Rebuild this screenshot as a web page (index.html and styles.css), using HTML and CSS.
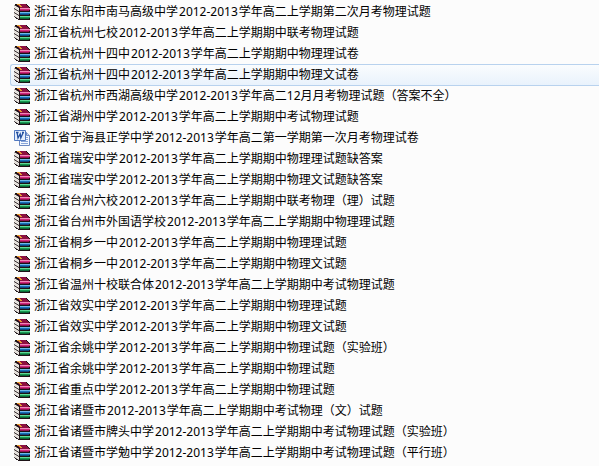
FILE: index.html
```html
<!DOCTYPE html>
<html lang="zh-CN">
<head>
<meta charset="UTF-8">
<meta name="viewport" content="width=device-width, initial-scale=1.0">
<title>物理试题</title>
<link rel="stylesheet" href="styles.css">
</head>
<body>

<svg class="sprite" aria-hidden="true">
  <!-- stack of three books -->
  <symbol id="rar" viewBox="0 0 16 16">
    <g shape-rendering="crispEdges">
      <path d="M1 0H12L16 4V6L15 7L16 8V10L15 11L16 12V15L15 16H5L0 13V1Z" fill="#1c1216"/>
      <path d="M2 0H11L15 4H6Z" fill="#8c1040"/>
      <path d="M3 0H6V1H7V2H8V3H6V2H5V1H3Z" fill="#e8a030"/>
      <path d="M6 4H16V5H6Z" fill="#f088b8"/>
      <path d="M6 5H16V6H6Z" fill="#d02878"/>
      <path d="M6 6H15V7H6Z" fill="#901050"/>
      <path d="M6 8H16V9H6Z" fill="#70b8e8"/>
      <path d="M6 9H16V10H6Z" fill="#1870b8"/>
      <path d="M6 10H15V11H6Z" fill="#104880"/>
      <path d="M6 12H16V13H6Z" fill="#60d898"/>
      <path d="M6 13H16V14H6Z" fill="#189850"/>
      <path d="M6 14H15V15H6Z" fill="#0c6838"/>
    </g>
    <path d="M0 1L5 4V7L0 4ZM0 5L5 8V11L0 8ZM0 9L5 12V15L0 12Z" fill="#fbf8f4"/>
    <path d="M0 2.500L5 5.500M0 6.500L5 9.500M0 10.500L5 13.500" stroke="#b8b0a8" stroke-width=".5"/>
  </symbol>
  <!-- Word document -->
  <symbol id="doc" viewBox="0 0 16 16">
    <path d="M5.500 2.500H12.500L15.500 5.500V15.500H5.500Z" fill="#f4f8fe" stroke="#6c88c0"/>
    <path d="M12.500 2.500V5.500H15.500" fill="#c4d4f0" stroke="#6c88c0"/>
    <path d="M12 7.500H14M12 9.500H14M7 11.500H14M7 13.500H14" stroke="#88a4d8"/>
    <path d="M.5.5H11.500V10.500H.5Z" fill="#e4eefc" stroke="#5078c0"/>
    <path d="M2 2.500H4.500M3.200 3L4 8L6.200 4L6.800 8L9 3M8 2.500H10" fill="none" stroke="#2450a0" stroke-width="1.300"/>
  </symbol>
</svg>

<ul class="file-list">
  <li><a class="file" href="#"><svg class="icon"><use href="#rar"/></svg><span>浙江省东阳市南马高级中学<span class="year">2012-2013</span>学年高二上学期第二次月考物理试题</span></a></li>
  <li><a class="file" href="#"><svg class="icon"><use href="#rar"/></svg><span>浙江省杭州七校<span class="year">2012-2013</span>学年高二上学期期中联考物理试题</span></a></li>
  <li><a class="file" href="#"><svg class="icon"><use href="#rar"/></svg><span>浙江省杭州十四中<span class="year">2012-2013</span>学年高二上学期期中物理理试卷</span></a></li>
  <li><a class="file active" href="#"><svg class="icon"><use href="#rar"/></svg><span>浙江省杭州十四中<span class="year">2012-2013</span>学年高二上学期期中物理文试卷</span></a></li>
  <li><a class="file" href="#"><svg class="icon"><use href="#rar"/></svg><span>浙江省杭州市西湖高级中学<span class="year">2012-2013</span>学年高二12月月考物理试题（答案不全）</span></a></li>
  <li><a class="file" href="#"><svg class="icon"><use href="#rar"/></svg><span>浙江省湖州中学<span class="year">2012-2013</span>学年高二上学期期中考试物理试题</span></a></li>
  <li><a class="file" href="#"><svg class="icon"><use href="#doc"/></svg><span>浙江省宁海县正学中学<span class="year">2012-2013</span>学年高二第一学期第一次月考物理试卷</span></a></li>
  <li><a class="file" href="#"><svg class="icon"><use href="#rar"/></svg><span>浙江省瑞安中学<span class="year">2012-2013</span>学年高二上学期期中物理理试题缺答案</span></a></li>
  <li><a class="file" href="#"><svg class="icon"><use href="#rar"/></svg><span>浙江省瑞安中学<span class="year">2012-2013</span>学年高二上学期期中物理文试题缺答案</span></a></li>
  <li><a class="file" href="#"><svg class="icon"><use href="#rar"/></svg><span>浙江省台州六校<span class="year">2012-2013</span>学年高二上学期期中联考物理（理）试题</span></a></li>
  <li><a class="file" href="#"><svg class="icon"><use href="#rar"/></svg><span>浙江省台州市外国语学校<span class="year">2012-2013</span>学年高二上学期期中物理理试题</span></a></li>
  <li><a class="file" href="#"><svg class="icon"><use href="#rar"/></svg><span>浙江省桐乡一中<span class="year">2012-2013</span>学年高二上学期期中物理理试题</span></a></li>
  <li><a class="file" href="#"><svg class="icon"><use href="#rar"/></svg><span>浙江省桐乡一中<span class="year">2012-2013</span>学年高二上学期期中物理文试题</span></a></li>
  <li><a class="file" href="#"><svg class="icon"><use href="#rar"/></svg><span>浙江省温州十校联合体<span class="year">2012-2013</span>学年高二上学期期中考试物理试题</span></a></li>
  <li><a class="file" href="#"><svg class="icon"><use href="#rar"/></svg><span>浙江省效实中学<span class="year">2012-2013</span>学年高二上学期期中物理理试题</span></a></li>
  <li><a class="file" href="#"><svg class="icon"><use href="#rar"/></svg><span>浙江省效实中学<span class="year">2012-2013</span>学年高二上学期期中物理文试题</span></a></li>
  <li><a class="file" href="#"><svg class="icon"><use href="#rar"/></svg><span>浙江省余姚中学<span class="year">2012-2013</span>学年高二上学期期中物理试题（实验班）</span></a></li>
  <li><a class="file" href="#"><svg class="icon"><use href="#rar"/></svg><span>浙江省余姚中学<span class="year">2012-2013</span>学年高二上学期期中物理试题</span></a></li>
  <li><a class="file" href="#"><svg class="icon"><use href="#rar"/></svg><span>浙江省重点中学<span class="year">2012-2013</span>学年高二上学期期中物理试题</span></a></li>
  <li><a class="file" href="#"><svg class="icon"><use href="#rar"/></svg><span>浙江省诸暨市<span class="year">2012-2013</span>学年高二上学期期中考试物理（文）试题</span></a></li>
  <li><a class="file" href="#"><svg class="icon"><use href="#rar"/></svg><span>浙江省诸暨市牌头中学<span class="year">2012-2013</span>学年高二上学期期中考试物理试题（实验班）</span></a></li>
  <li><a class="file" href="#"><svg class="icon"><use href="#rar"/></svg><span>浙江省诸暨市学勉中学<span class="year">2012-2013</span>学年高二上学期期中考试物理试题（平行班）</span></a></li>
  <li><a class="file" href="#"><svg class="icon"><use href="#rar"/></svg></a></li>
</ul>

</body>
</html>
```
FILE: styles.css
```css
body {
    margin: 0;
    height: 100vh;
    overflow: hidden;
    background-color: #fcfcfc;
    color: #000;
    font-family: "Noto Sans", "Noto Sans CJK SC", sans-serif;
    font-size: 12px;
    line-height: 20px;
}

.sprite {
    display: none;
}

.file-list {
    list-style: none;
    margin: 0;
    padding: 1px 0 0 10px;
}

/* neighbouring rows share one border line */
.file-list li {
    margin-bottom: -1px;
}

.file {
    display: flex;
    align-items: center;
    gap: 4px;
    height: 20px;
    padding-left: 3px;
    border: 1px solid transparent;
    border-right: none;
    border-radius: 3px 0 0 3px;
    color: inherit;
    text-decoration: none;
    white-space: nowrap;
}

.file:hover,
.file.active {
    border-color: #b8d2ee;
    background: linear-gradient(#fafcfe, #e9f2fc);
}

.icon {
    width: 16px;
    height: 16px;
    flex: none;
}

.year {
    padding: 0 1px;
}
```
